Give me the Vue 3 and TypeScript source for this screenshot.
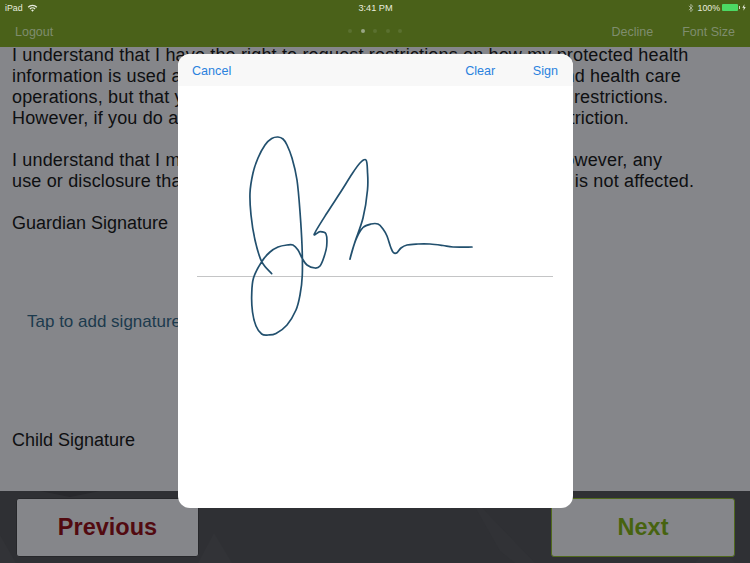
<script setup lang="ts">
const pts: [number, number][] = [
  [271.7,273.7],[261.7,261.7],[255,240],[251,215],[250,193],[253,173],[258,158],[265,145],[271.7,138.5],[278,137],[283,139],[287,145],[292,158],[297,180],[300,211.7],[302,245],[302.3,275],[300,295],[296,310],[287,325],[276,333.5],[268,335],[261.7,334],[256,326],[252.5,312],[251.7,295],[253.5,278],[261.7,261.7],[270,252],[278,247],[287,245],[293,245],[298,250],[302,258],[307,265],[315,268],[320,266],[324,257],[326.7,246],[326,234],[320,231.7],[314.3,234],[327,213],[340,193],[352,174],[360,163],[366,160],[367.5,172],[367.5,190],[363,218],[355,241.7],[350,259],[353,248],[357,237],[363,227.5],[371,224],[378,224],[383,229],[387,236],[391,248],[393.5,252.7],[397,252.7],[401,248],[407,245],[418,244],[430,244],[443,245.5],[453,247],[472,247],
]
function smooth(p: [number, number][]): string {
  let d = `M${p[0][0]} ${p[0][1]}`
  for (let i = 0; i < p.length - 1; i++) {
    const a = p[Math.max(i - 1, 0)], b = p[i], c = p[i + 1], e = p[Math.min(i + 2, p.length - 1)]
    const c1x = b[0] + (c[0] - a[0]) / 6, c1y = b[1] + (c[1] - a[1]) / 6
    const c2x = c[0] - (e[0] - b[0]) / 6, c2y = c[1] - (e[1] - b[1]) / 6
    d += `C${c1x.toFixed(1)} ${c1y.toFixed(1)} ${c2x.toFixed(1)} ${c2y.toFixed(1)} ${c[0]} ${c[1]}`
  }
  return d
}
const sig = smooth(pts)
const dots = [false, true, false, false, false]
const para1 = [
  'I understand that I have the right to request restrictions on how my protected health',
  'information is used and disclosed to carry out treatment, payment, and health care',
  'operations, but that you are not required to agree to these requested restrictions.',
  'However, if you do agree, you are then bound to comply with this restriction.',
]
const para2 = [
  'I understand that I may revoke this authorization, in writing, at will; however, any',
  'use or disclosure that occurred before the written revocation is made is not affected.',
]
</script>

<template>
  <div class="screen">
    <header class="top">
      <div class="status">
        <div class="st-left">
          <span>iPad</span>
          <svg class="wifi" viewBox="0 0 12 9" width="11" height="8">
            <path d="M0.6 3 A7.6 7.6 0 0 1 11.4 3 L10.3 4.1 A6 6 0 0 0 1.7 4.1 Z M2.6 5 A4.8 4.8 0 0 1 9.4 5 L8.3 6.1 A3.2 3.2 0 0 0 3.7 6.1 Z M4.5 7 A2.1 2.1 0 0 1 7.5 7 L6 8.6 Z" fill="#e8ecdf" />
          </svg>
        </div>
        <div class="st-time">3:41 PM</div>
        <div class="st-right">
          <svg class="bt" viewBox="0 0 7 11" width="6" height="10">
            <path d="M1 3 L5.5 7.5 L3.3 9.8 V1.2 L5.5 3.5 L1 8" fill="none" stroke="#b9c2a6" stroke-width="0.9" />
          </svg>
          <span>100%</span>
          <span class="battery"><i class="cell"></i><i class="nub"></i></span>
          <svg class="bolt" viewBox="0 0 5 8" width="4" height="7"><path d="M3 0 L0.4 4.4 H2.2 L1.8 8 L4.6 3.4 H2.7 Z" fill="#e8ecdf" /></svg>
        </div>
      </div>
      <nav class="nav">
        <span class="nav-item logout">Logout</span>
        <div class="dots">
          <i v-for="(on, i) in dots" :key="i" class="dot" :class="{ on }"></i>
        </div>
        <div class="nav-right">
          <span class="nav-item">Decline</span>
          <span class="nav-item">Font Size</span>
        </div>
      </nav>
    </header>

    <main class="doc">
      <div class="para">
        <div v-for="l in para1" :key="l" class="line">{{ l }}</div>
      </div>
      <div class="para">
        <div v-for="l in para2" :key="l" class="line">{{ l }}</div>
      </div>
      <div class="label guardian">Guardian Signature</div>
      <div class="tap">Tap to add signature</div>
      <div class="label child">Child Signature</div>
    </main>

    <footer class="foot">
      <svg class="tri" viewBox="0 0 750 72" width="750" height="72" preserveAspectRatio="none">
        <polygon points="0,44 16,72 0,72" fill="#323337" />
        <polygon points="198,72 214,42 232,72" fill="#323337" />
        <polygon points="440,0 450,18 466,0" fill="#36373b" />
        <polygon points="466,0 500,60 515,72 535,72" fill="#313236" />
        <polygon points="695,72 715,50 735,72" fill="#313236" />
        <polygon points="40,0 100,0 70,6" fill="#28292d" />
      </svg>
      <button class="btn prev">Previous</button>
      <button class="btn next">Next</button>
    </footer>

    <section class="modal">
      <div class="m-head">
        <span class="m-link">Cancel</span>
        <div class="m-actions">
          <span class="m-link">Clear</span>
          <span class="m-link">Sign</span>
        </div>
      </div>
    </section>
    <svg class="sig" viewBox="0 0 750 563" width="750" height="563">
      <line x1="197" y1="276.5" x2="553" y2="276.5" stroke="#c4c5c6" stroke-width="1" />
      <path :d="sig" fill="none" stroke="#22506e" stroke-width="1.7" stroke-linecap="round" stroke-linejoin="round" />
    </svg>
  </div>
</template>

<style>
html, body { margin: 0; padding: 0; background: #85868a; }
</style>

<style scoped>
.screen {
  position: relative;
  width: 750px;
  height: 563px;
  overflow: hidden;
  display: flex;
  flex-direction: column;
  background: #85868a;
  font-family: "Liberation Sans", Arial, sans-serif;
}
.top { background: #4a6119; height: 47px; flex: none; position: relative; z-index: 1; }
.status {
  height: 15px;
  padding: 0 4px 0 5px;
  display: grid;
  grid-template-columns: 1fr auto 1fr;
  align-items: center;
  font-size: 8.8px;
  color: #e8ecdf;
}
.st-left { display: flex; align-items: center; gap: 4px; }
.st-time { font-size: 9.2px; }
.st-right { display: flex; align-items: center; justify-content: flex-end; gap: 2px; }
.bt { margin-right: 2px; }
.battery { display: flex; align-items: center; }
.cell { display: block; width: 16px; height: 7px; background: #4cd964; border-radius: 1px; }
.nub { display: block; width: 1px; height: 3px; background: #cfd6bf; margin-left: 1px; }
.nav {
  height: 32px;
  position: relative;
  display: flex;
  align-items: center;
  justify-content: space-between;
  padding: 1px 15px 0 15px;
  box-sizing: border-box;
}
.nav-item { font-size: 12.5px; color: #7f8d6e; }
.nav-right { display: flex; gap: 29px; }
.dots {
  position: absolute;
  left: 348px;
  top: 14px;
  display: flex;
  gap: 8.5px;
}
.dot { display: block; width: 4px; height: 4px; border-radius: 50%; background: #5a7030; }
.dot.on { background: #98a585; }
.doc {
  flex: 1;
  overflow: hidden;
  padding: 0 12px;
  font-size: 18px;
  line-height: 21px;
  color: #0e0f11;
  position: relative;
  margin-top: -2px;
}
.para { margin-bottom: 21px; }
.line { white-space: nowrap; letter-spacing: 0.165px; }
.label { white-space: nowrap; }
.guardian { margin-top: 21px; }
.tap { margin: 77px 0 0 15px; color: #1c3a4d; font-size: 17px; white-space: nowrap; }
.child { margin-top: 98px; }
.foot {
  position: relative;
  height: 72px;
  flex: none;
  background: #2f3034;
  display: flex;
  justify-content: space-between;
  align-items: center;
  padding: 0 15px 0 16px;
  box-sizing: border-box;
}
.tri { position: absolute; left: 0; top: 0; }
.btn {
  position: relative;
  width: 183px;
  height: 59px;
  border-radius: 3px;
  background: #85868a;
  font-family: "Liberation Sans", Arial, sans-serif;
  font-weight: 700;
  font-size: 23.5px;
  padding: 0;
}
.prev { color: #520a10; border: 1px solid #26272a; }
.next { color: #47630f; border: 1px solid #50691c; width: 184px; }
.modal {
  position: absolute;
  left: 178px;
  top: 54px;
  width: 395px;
  height: 454px;
  background: #fff;
  border-radius: 12px;
  overflow: hidden;
  z-index: 2;
}
.m-head {
  height: 32px;
  background: #f8f8f8;
  display: flex;
  justify-content: space-between;
  align-items: center;
  padding: 2px 15px 0 14px;
  box-sizing: border-box;
}
.m-actions { display: flex; gap: 37.5px; }
.m-link { font-size: 12.6px; color: #2b82de; }
.sig { position: absolute; left: 0; top: 0; z-index: 3; pointer-events: none; }
</style>
